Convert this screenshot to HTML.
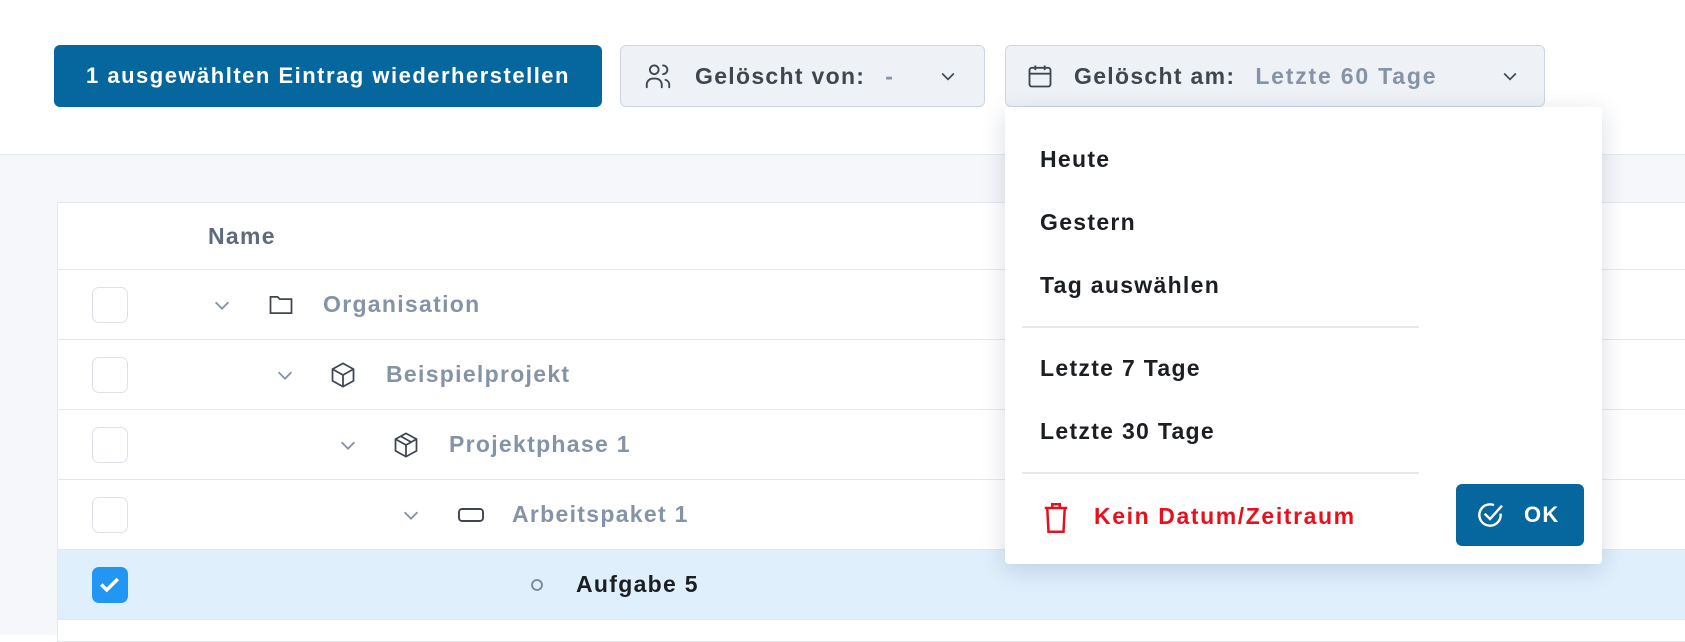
<!DOCTYPE html>
<html><head><meta charset="utf-8"><style>
*{box-sizing:border-box;margin:0;padding:0}
body{width:1685px;height:635px;overflow:hidden;background:#fff;font-family:"Liberation Sans",sans-serif;position:relative;font-weight:bold;letter-spacing:1.3px}
.abs{position:absolute}
.band{left:0;top:154px;width:1685px;height:481px;background:#f5f7fa;border-top:1px solid #e3e8ee}
.btn{left:54px;top:45px;width:548px;height:62px;background:#06679e;border-radius:6px;color:#fff;font-size:22px;display:flex;align-items:center;justify-content:center;letter-spacing:1.5px}
.sel{top:45px;height:62px;background:#eef2f7;border:1px solid #cdd5df;border-radius:6px;display:flex;align-items:center;font-size:23px;color:#3f4650}
.chev{position:absolute;top:20px}
.table{left:57px;top:202px;width:1700px;height:440px;background:#fff;border:1px solid #e3e8ee}
.row{position:absolute;left:0;width:100%;border-bottom:1px solid #e3e8ee;height:70px;display:flex;align-items:center}
.cb{position:absolute;left:34px;width:36px;height:36px;border:1.5px solid #dde2e8;border-radius:7px;background:#fff}
.lbl{color:#8593a6;font-size:23px}
.panel{left:1005px;top:107px;width:597px;height:457px;background:#fff;border-radius:4px;box-shadow:0 6px 24px rgba(40,60,90,.18)}
.it{position:absolute;left:35px;font-size:23px;color:#1b1e22}
.sep{position:absolute;left:17px;width:397px;height:2px;background:#e3e8ee}
</style></head><body>
<div class="abs band"></div>
<div class="abs btn">1 ausgewählten Eintrag wiederherstellen</div>
<div class="abs sel" style="left:620px;width:365px">
 <svg style="margin-left:22px" width="30" height="30" viewBox="0 0 24 24" fill="none" stroke="#3f4650" stroke-width="1.5" stroke-linecap="round"><circle cx="9" cy="7" r="3.5"/><path d="M3 21v-2a5 5 0 0 1 5-5h2a5 5 0 0 1 5 5v2"/><path d="M16 3.5a3.5 3.5 0 0 1 0 7"/><path d="M21 21v-2a4 4 0 0 0-3-3.9"/></svg>
 <span style="margin-left:22px">Gelöscht von:</span><span style="margin-left:20px;color:#8593a6">-</span>
 <svg class="chev" style="left:317px" width="20" height="20" viewBox="0 0 24 24" fill="none" stroke="#3f4650" stroke-width="2"><path d="M5 9l7 7 7-7"/></svg>
</div>
<div class="abs sel" style="left:1005px;width:540px">
 <svg style="margin-left:20px" width="28" height="30" viewBox="0 0 24 24" fill="none" stroke="#3f4650" stroke-width="1.6"><rect x="3" y="5" width="18" height="16" rx="2"/><path d="M3 10h18M8 3v4M16 3v4"/></svg>
 <span style="margin-left:20px">Gelöscht am:</span><span style="margin-left:20px;color:#8593a6;letter-spacing:1.8px">Letzte 60 Tage</span>
 <svg class="chev" style="left:494px" width="20" height="20" viewBox="0 0 24 24" fill="none" stroke="#3f4650" stroke-width="2"><path d="M5 9l7 7 7-7"/></svg>
</div>
<div class="abs table">
 <div class="row" style="top:0;height:67px"><span style="position:absolute;left:150px;font-size:23px;color:#5f6b7a">Name</span></div>
 <div class="row" style="top:67px"><div class="cb"></div>
  <svg class="abs" style="left:153px" width="22" height="22" viewBox="0 0 24 24" fill="none" stroke="#8593a6" stroke-width="2"><path d="M5 9l7 7 7-7"/></svg>
  <svg class="abs" style="left:208px" width="30" height="28" viewBox="0 0 24 24" fill="none" stroke="#3f4650" stroke-width="1.5"><path d="M3 5h6l2 2h10v12H3z"/></svg>
  <span class="lbl abs" style="left:265px">Organisation</span></div>
 <div class="row" style="top:137px"><div class="cb"></div>
  <svg class="abs" style="left:216px" width="22" height="22" viewBox="0 0 24 24" fill="none" stroke="#8593a6" stroke-width="2"><path d="M5 9l7 7 7-7"/></svg>
  <svg class="abs" style="left:271px" width="28" height="30" viewBox="0 0 24 24" fill="none" stroke="#3f4650" stroke-width="1.5"><path d="M12 2l9 5v10l-9 5-9-5V7z"/><path d="M3 7l9 5 9-5M12 12v10"/></svg>
  <span class="lbl abs" style="left:328px">Beispielprojekt</span></div>
 <div class="row" style="top:207px"><div class="cb"></div>
  <svg class="abs" style="left:279px" width="22" height="22" viewBox="0 0 24 24" fill="none" stroke="#8593a6" stroke-width="2"><path d="M5 9l7 7 7-7"/></svg>
  <svg class="abs" style="left:334px" width="28" height="30" viewBox="0 0 24 24" fill="none" stroke="#3f4650" stroke-width="1.5"><path d="M12 2l9 5v10l-9 5-9-5V7z"/><path d="M3 7l9 5 9-5M12 12v10M7.5 4.5l9 5"/></svg>
  <span class="lbl abs" style="left:391px">Projektphase 1</span></div>
 <div class="row" style="top:277px"><div class="cb"></div>
  <svg class="abs" style="left:342px" width="22" height="22" viewBox="0 0 24 24" fill="none" stroke="#8593a6" stroke-width="2"><path d="M5 9l7 7 7-7"/></svg>
  <svg class="abs" style="left:398px" width="30" height="24" viewBox="0 0 24 20" fill="none" stroke="#3f4650" stroke-width="1.6"><rect x="2" y="5" width="20" height="10" rx="2.5"/></svg>
  <span class="lbl abs" style="left:454px">Arbeitspaket 1</span></div>
 <div class="row" style="top:347px;background:#e0effc"><div class="cb" style="background:#2196f3;border-color:#2196f3">
  <svg width="33" height="33" viewBox="0 0 24 24" fill="none" stroke="#fff" stroke-width="2.5"><path d="M6 12l4 4 8-8"/></svg></div>
  <svg class="abs" style="left:471px" width="16" height="16" viewBox="0 0 16 16" fill="none" stroke="#7a8594" stroke-width="1.8"><circle cx="8" cy="8" r="5"/></svg>
  <span class="abs" style="left:518px;font-size:23px;color:#1b1e22">Aufgabe 5</span></div>
</div>
<div class="abs panel">
 <div class="it" style="top:39px">Heute</div>
 <div class="it" style="top:102px">Gestern</div>
 <div class="it" style="top:165px">Tag auswählen</div>
 <div class="sep" style="top:219px"></div>
 <div class="it" style="top:248px">Letzte 7 Tage</div>
 <div class="it" style="top:311px">Letzte 30 Tage</div>
 <div class="sep" style="top:365px"></div>
 <svg class="abs" style="left:36px;top:394px" width="30" height="34" viewBox="0 0 24 26" fill="none" stroke="#e8101c" stroke-width="2"><path d="M3 5h18M9 5V2h6v3M5 5l1 19h12l1-19"/></svg>
 <div class="it" style="top:396px;left:89px;color:#e8101c;letter-spacing:1.6px">Kein Datum/Zeitraum</div>
 <div class="abs" style="left:451px;top:377px;width:128px;height:62px;background:#06679e;border-radius:6px;display:flex;align-items:center;color:#fff;font-size:22px">
  <svg style="margin-left:18px" width="32" height="32" viewBox="0 0 24 24" fill="none" stroke="#fff" stroke-width="1.8"><path d="M20 11v1a8 8 0 1 1-5-7.4"/><path d="M8 11l4 4 9-10"/></svg>
  <span style="margin-left:18px">OK</span></div>
</div>
</body></html>
